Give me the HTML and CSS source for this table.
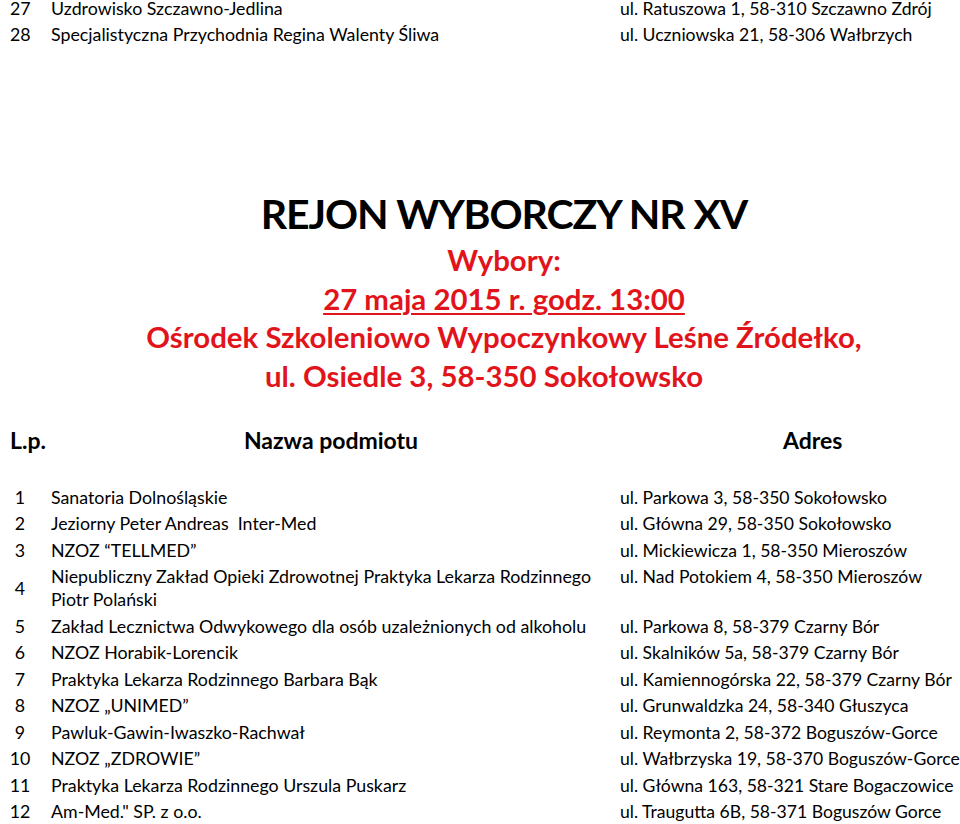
FILE: index.html
```html
<!DOCTYPE html>
<html lang="pl">
<head>
<meta charset="utf-8">
<title>Rejon wyborczy nr XV</title>
<link rel="stylesheet" href="styles.css">
</head>
<body>
<div class="page">
  <div class="list top">
    <div class="row"><span class="num">27</span><span class="name">Uzdrowisko Szczawno-Jedlina</span><span class="addr">ul. Ratuszowa 1, 58-310 Szczawno Zdrój</span></div>
    <div class="row"><span class="num">28</span><span class="name">Specjalistyczna Przychodnia Regina Walenty Śliwa</span><span class="addr">ul. Uczniowska 21, 58-306 Wałbrzych</span></div>
  </div>

  <div class="heading">
    <h1 class="title">REJON WYBORCZY NR XV</h1>
    <p class="red">Wybory:</p>
    <p class="red under">27 maja 2015 r. godz. 13:00</p>
    <p class="red">Ośrodek Szkoleniowo Wypoczynkowy Leśne Źródełko,</p>
    <p class="red last">ul. Osiedle 3, 58-350 Sokołowsko</p>
  </div>

  <div class="thead">
    <span class="th-num">L.p.</span>
    <span class="th-name">Nazwa podmiotu</span>
    <span class="th-addr">Adres</span>
  </div>

  <div class="list body">
    <div class="row"><span class="num">1</span><span class="name">Sanatoria Dolnośląskie</span><span class="addr">ul. Parkowa 3, 58-350 Sokołowsko</span></div>
    <div class="row"><span class="num">2</span><span class="name">Jeziorny Peter Andreas&nbsp; Inter-Med</span><span class="addr">ul. Główna 29, 58-350 Sokołowsko</span></div>
    <div class="row"><span class="num">3</span><span class="name">NZOZ “TELLMED”</span><span class="addr">ul. Mickiewicza 1, 58-350 Mieroszów</span></div>
    <div class="row"><span class="num">4</span><span class="name">Niepubliczny Zakład Opieki Zdrowotnej Praktyka Lekarza Rodzinnego<br>Piotr Polański</span><span class="addr">ul. Nad Potokiem 4, 58-350 Mieroszów</span></div>
    <div class="row"><span class="num">5</span><span class="name">Zakład Lecznictwa Odwykowego dla osób uzależnionych od alkoholu</span><span class="addr">ul. Parkowa 8, 58-379 Czarny Bór</span></div>
    <div class="row"><span class="num">6</span><span class="name">NZOZ Horabik-Lorencik</span><span class="addr">ul. Skalników 5a, 58-379 Czarny Bór</span></div>
    <div class="row"><span class="num">7</span><span class="name">Praktyka Lekarza Rodzinnego Barbara Bąk</span><span class="addr">ul. Kamiennogórska 22, 58-379 Czarny Bór</span></div>
    <div class="row"><span class="num">8</span><span class="name">NZOZ „UNIMED”</span><span class="addr">ul. Grunwaldzka 24, 58-340 Głuszyca</span></div>
    <div class="row"><span class="num">9</span><span class="name">Pawluk-Gawin-Iwaszko-Rachwał</span><span class="addr">ul. Reymonta 2, 58-372 Boguszów-Gorce</span></div>
    <div class="row"><span class="num">10</span><span class="name">NZOZ „ZDROWIE”</span><span class="addr">ul. Wałbrzyska 19, 58-370 Boguszów-Gorce</span></div>
    <div class="row"><span class="num">11</span><span class="name">Praktyka Lekarza Rodzinnego Urszula Puskarz</span><span class="addr">ul. Główna 163, 58-321 Stare Bogaczowice</span></div>
    <div class="row"><span class="num">12</span><span class="name">Am-Med." SP. z o.o.</span><span class="addr">ul. Traugutta 6B, 58-371 Boguszów Gorce</span></div>
  </div>
</div>
</body>
</html>
```

FILE: styles.css
```css
html, body {
  margin: 0;
  padding: 0;
  background: #ffffff;
}

body {
  font-family: Lato, "Liberation Sans", sans-serif;
  color: #000000;
  overflow: hidden;
}

.page {
  width: 960px;
  height: 824px;
  overflow: hidden;
}

.list {
  display: flex;
  flex-direction: column;
}

.row {
  display: grid;
  grid-template-columns: 42px 560px 1fr;
  column-gap: 9px;
  font-size: 17.8px;
  line-height: 23px;
  padding-bottom: 3.5px;
  white-space: nowrap;
}

.num {
  text-align: center;
  align-self: center;
  padding-right: 2px;
}

.addr {
  align-self: start;
  font-size: 17.6px;
}

.top {
  margin-top: -3px;
}

.top .row {
  padding-bottom: 3px;
}

.top .num {
  text-align: left;
  padding-left: 10px;
  padding-right: 0;
}

.heading {
  margin-top: 138px;
  padding-left: 48px;
  text-align: center;
}

.title {
  margin: 0;
  font-size: 41px;
  letter-spacing: -1.1px;
  line-height: 54px;
  font-weight: 700;
  color: #000000;
}

.red {
  margin: 0;
  color: #e2141b;
  font-weight: 700;
  font-size: 29.4px;
  line-height: 38.7px;
}

.red.last {
  padding-right: 40px;
}

.under {
  text-decoration: underline;
  text-decoration-thickness: 2px;
  text-underline-offset: 3px;
}

.thead {
  display: grid;
  grid-template-columns: 42px 560px 1fr;
  column-gap: 9px;
  margin-top: 30px;
  font-size: 23px;
  line-height: 28px;
  font-weight: 700;
}

.th-num {
  padding-left: 10px;
}

.th-name {
  text-align: center;
}

.th-addr {
  padding-left: 163px;
}

.body {
  margin-top: 32px;
}
```
